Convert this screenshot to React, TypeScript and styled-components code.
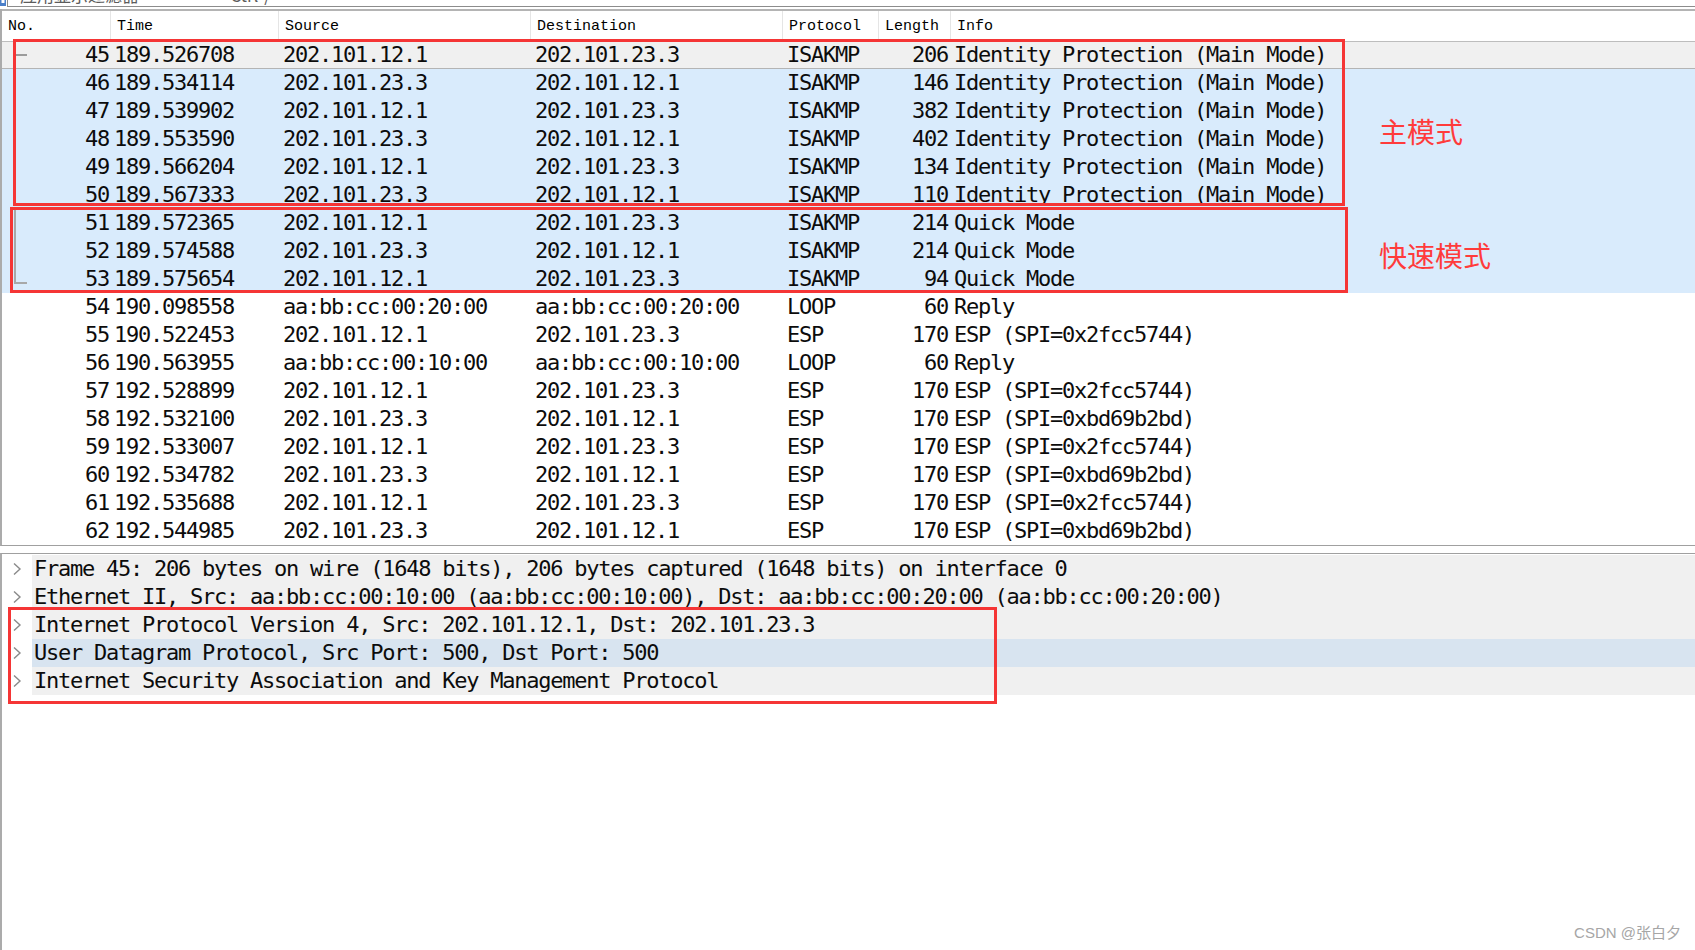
import styled, { createGlobalStyle } from "styled-components";

const GlobalStyle = createGlobalStyle`
  html, body {
    margin: 0;
    padding: 0;
    background: #ffffff;
  }
  body {
    font-family: "DejaVu Sans Mono", monospace;
  }
`;

const COLUMNS = "109px 168px 252px 252px 96px 72px 1fr";

const Window = styled.div`
  position: relative;
  width: 1695px;
  height: 950px;
  overflow: hidden;
  display: flex;
  flex-direction: column;
  background: #ffffff;
`;

const FilterStrip = styled.div`
  display: flex;
  height: 9px;
  padding-bottom: 2px;
  box-sizing: border-box;
`;

const FilterIcon = styled.div`
  width: 7px;
  height: 7px;
  overflow: hidden;
  display: flex;
  align-items: flex-end;
`;

const FilterInput = styled.div`
  flex: 1;
  height: 7px;
  overflow: hidden;
  border-left: 1px solid #8c8c8c;
  border-bottom: 1px solid #8c8c8c;
  box-sizing: border-box;
  padding-left: 12px;
`;

const FilterText = styled.span`
  display: block;
  margin-top: -15px;
  font-family: "Noto Sans CJK SC", sans-serif;
  font-size: 17px;
  line-height: 20px;
  color: #5c5c5c;
  white-space: pre;
`;

const PacketList = styled.div`
  border-left: 2px solid #ababab;
  border-bottom: 1px solid #a0a0a0;
`;

const HeaderRow = styled.div`
  display: grid;
  grid-template-columns: ${COLUMNS};
  height: 32px;
  box-sizing: border-box;
  border-top: 2px solid #b4b4b4;
`;

const HeaderCell = styled.div<{ $last?: boolean }>`
  padding: 2px 0 0 6px;
  font-family: "Liberation Mono", "Courier New", monospace;
  font-size: 15px;
  line-height: 28px;
  color: #000000;
  border-right: ${(p) => (p.$last ? "none" : "1px solid #e5e5e5")};
`;

type Variant = "current" | "related" | "plain";

const rowBg: Record<Variant, string> = {
  current: "#f0f0f0",
  related: "#d9ebfc",
  plain: "#ffffff",
};

const PacketRow = styled.div<{ $variant: Variant }>`
  display: grid;
  grid-template-columns: ${COLUMNS};
  height: 28px;
  background: ${(p) => rowBg[p.$variant]};
  box-shadow: ${(p) =>
    p.$variant === "current"
      ? "inset 0 1px 0 #bdbdbd, inset 0 -1px 0 #b4b4b4"
      : "none"};
  font-family: "DejaVu Sans Mono", monospace;
  font-size: 22px;
  line-height: 28px;
  letter-spacing: -1.24px;
  color: #0c0c0c;
  white-space: pre;
`;

const Cell = styled.div<{ $right?: boolean; $pad?: number }>`
  text-align: ${(p) => (p.$right ? "right" : "left")};
  padding-left: ${(p) => (p.$right ? 0 : p.$pad ?? 4)}px;
  padding-right: ${(p) => (p.$right ? p.$pad ?? 3 : 0)}px;
  overflow: hidden;
`;

const NoCell = styled.div`
  display: flex;
  justify-content: space-between;
  align-items: stretch;
  padding-right: 2px;
`;

const DetailPane = styled.div`
  flex: 1;
  margin-top: 7px;
  padding-top: 1px;
  border-top: 1px solid #a0a0a0;
  border-left: 2px solid #ababab;
`;

const DetailRow = styled.div`
  display: grid;
  grid-template-columns: 30px 1fr;
  height: 28px;
`;

const Chevron = styled.div`
  display: flex;
  align-items: center;
  padding-left: 10px;
`;

const DetailText = styled.div<{ $selected?: boolean }>`
  padding-left: 2px;
  background: ${(p) => (p.$selected ? "#d8e4f0" : "#f0f0f0")};
  font-family: "DejaVu Sans Mono", monospace;
  font-size: 22px;
  line-height: 28px;
  letter-spacing: -1.24px;
  color: #0c0c0c;
  white-space: pre;
`;

const Mark = styled.div<{ $left: number; $top: number; $w: number; $h: number }>`
  position: absolute;
  left: ${(p) => p.$left}px;
  top: ${(p) => p.$top}px;
  width: ${(p) => p.$w}px;
  height: ${(p) => p.$h}px;
  border: 3px solid #f53535;
  box-sizing: border-box;
  pointer-events: none;
`;

const Note = styled.div<{ $left: number; $top: number }>`
  position: absolute;
  left: ${(p) => p.$left}px;
  top: ${(p) => p.$top}px;
  font-family: "Noto Sans CJK SC", sans-serif;
  font-size: 28px;
  line-height: 28px;
  color: #ff3b3b;
`;

const Watermark = styled.div`
  position: absolute;
  right: 14px;
  bottom: 8px;
  font-family: "Liberation Sans", "Noto Sans CJK SC", sans-serif;
  font-size: 15px;
  color: #a6a6a6;
`;

type Tree = "dash" | "line" | "end" | undefined;

const TreeMark = ({ kind }: { kind: Tree }) => (
  <svg width="30" height="28" viewBox="0 0 30 28">
    {kind === "dash" && (
      <line x1="13" y1="14" x2="25" y2="14" stroke="#9c9c9c" strokeWidth="2" />
    )}
    {kind === "line" && (
      <line x1="13" y1="0" x2="13" y2="28" stroke="#a8a8a8" strokeWidth="2" />
    )}
    {kind === "end" && (
      <polyline
        points="13,0 13,18 25,18"
        fill="none"
        stroke="#a8a8a8"
        strokeWidth="2"
      />
    )}
  </svg>
);

const ChevronIcon = () => (
  <svg width="10" height="14" viewBox="0 0 10 14">
    <polyline
      points="2,1.5 8,7 2,12.5"
      fill="none"
      stroke="#8a8a8a"
      strokeWidth="1.4"
    />
  </svg>
);

type Packet = [number, string, string, string, string, number, string];

const MAIN = "Identity Protection (Main Mode)";
const ESP_A = "ESP (SPI=0x2fcc5744)";
const ESP_B = "ESP (SPI=0xbd69b2bd)";
const A = "202.101.12.1";
const B = "202.101.23.3";

const packets: Packet[] = [
  [45, "189.526708", A, B, "ISAKMP", 206, MAIN],
  [46, "189.534114", B, A, "ISAKMP", 146, MAIN],
  [47, "189.539902", A, B, "ISAKMP", 382, MAIN],
  [48, "189.553590", B, A, "ISAKMP", 402, MAIN],
  [49, "189.566204", A, B, "ISAKMP", 134, MAIN],
  [50, "189.567333", B, A, "ISAKMP", 110, MAIN],
  [51, "189.572365", A, B, "ISAKMP", 214, "Quick Mode"],
  [52, "189.574588", B, A, "ISAKMP", 214, "Quick Mode"],
  [53, "189.575654", A, B, "ISAKMP", 94, "Quick Mode"],
  [54, "190.098558", "aa:bb:cc:00:20:00", "aa:bb:cc:00:20:00", "LOOP", 60, "Reply"],
  [55, "190.522453", A, B, "ESP", 170, ESP_A],
  [56, "190.563955", "aa:bb:cc:00:10:00", "aa:bb:cc:00:10:00", "LOOP", 60, "Reply"],
  [57, "192.528899", A, B, "ESP", 170, ESP_A],
  [58, "192.532100", B, A, "ESP", 170, ESP_B],
  [59, "192.533007", A, B, "ESP", 170, ESP_A],
  [60, "192.534782", B, A, "ESP", 170, ESP_B],
  [61, "192.535688", A, B, "ESP", 170, ESP_A],
  [62, "192.544985", B, A, "ESP", 170, ESP_B],
];

const treeFor: Record<number, Tree> = { 45: "dash", 51: "line", 52: "line", 53: "end" };

const variantFor = (no: number): Variant =>
  no === 45 ? "current" : no <= 53 ? "related" : "plain";

const details = [
  "Frame 45: 206 bytes on wire (1648 bits), 206 bytes captured (1648 bits) on interface 0",
  "Ethernet II, Src: aa:bb:cc:00:10:00 (aa:bb:cc:00:10:00), Dst: aa:bb:cc:00:20:00 (aa:bb:cc:00:20:00)",
  "Internet Protocol Version 4, Src: 202.101.12.1, Dst: 202.101.23.3",
  "User Datagram Protocol, Src Port: 500, Dst Port: 500",
  "Internet Security Association and Key Management Protocol",
];

const headers = ["No.", "Time", "Source", "Destination", "Protocol", "Length", "Info"];

const App = () => {
  return (
    <>
      <GlobalStyle />
      <Window>
        <FilterStrip>
          <FilterIcon>
            <svg width="7" height="7" viewBox="0 0 7 7">
              <rect x="0" y="0" width="6" height="6" fill="#4a7fc9" />
              <rect x="1.5" y="0" width="3" height="3" fill="#ffffff" />
            </svg>
          </FilterIcon>
          <FilterInput>
            <FilterText>{"应用显示过滤器 …                <Ctrl-/>"}</FilterText>
          </FilterInput>
        </FilterStrip>

        <PacketList>
          <HeaderRow>
            {headers.map((h, i) => (
              <HeaderCell key={h} $last={i === headers.length - 1}>
                {h}
              </HeaderCell>
            ))}
          </HeaderRow>
          {packets.map(([no, time, src, dst, proto, len, info]) => (
            <PacketRow key={no} $variant={variantFor(no)}>
              <NoCell>
                <TreeMark kind={treeFor[no]} />
                <span>{no}</span>
              </NoCell>
              <Cell $pad={3}>{time}</Cell>
              <Cell>{src}</Cell>
              <Cell>{dst}</Cell>
              <Cell>{proto}</Cell>
              <Cell $right $pad={3}>
                {len}
              </Cell>
              <Cell $pad={3}>{info}</Cell>
            </PacketRow>
          ))}
        </PacketList>

        <DetailPane>
          {details.map((d, i) => (
            <DetailRow key={d}>
              <Chevron>
                <ChevronIcon />
              </Chevron>
              <DetailText $selected={i === 3}>{d}</DetailText>
            </DetailRow>
          ))}
        </DetailPane>

        <Mark $left={13} $top={39} $w={1332} $h={167} />
        <Mark $left={10} $top={207} $w={1338} $h={86} />
        <Mark $left={8} $top={607} $w={989} $h={97} />
        <Note $left={1379} $top={117}>主模式</Note>
        <Note $left={1379} $top={241}>快速模式</Note>
        <Watermark>CSDN @张白夕</Watermark>
      </Window>
    </>
  );
};

export default App;
